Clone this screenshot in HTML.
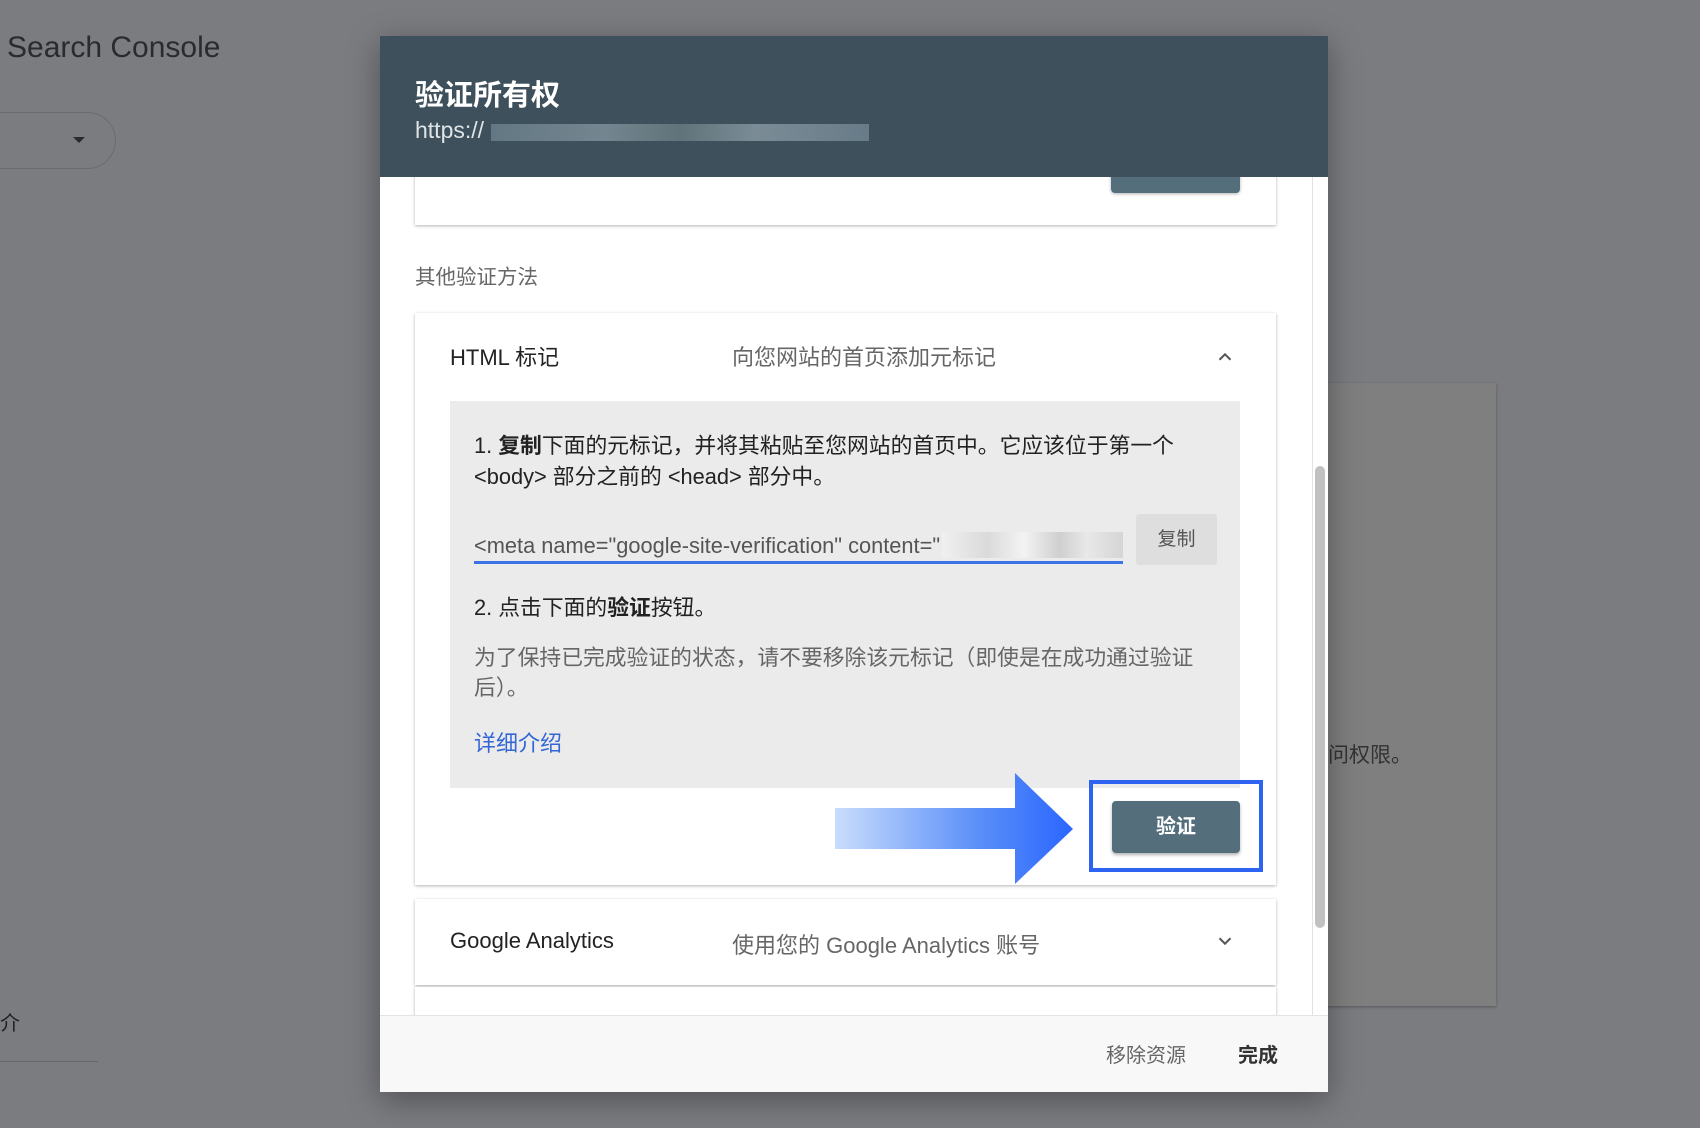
<!DOCTYPE html>
<html><head><meta charset="utf-8"><style>
*{margin:0;padding:0;box-sizing:border-box}
body{width:1700px;height:1128px;overflow:hidden;background:#7b7c80;font-family:"Liberation Sans","Noto Sans CJK SC",sans-serif;position:relative}
.a{position:absolute;white-space:nowrap}
.card{position:absolute;background:#fff;box-shadow:0 1px 3px rgba(0,0,0,.3)}
.t{color:#222;font-size:21.8px}
.g{color:#666;font-size:21.8px}
</style></head><body>
<div class="a" style="left:7px;top:31px;font-size:30px;color:#2b2b2d">Search Console</div>
<div class="a" style="left:-40px;top:112px;width:156px;height:57px;border:1px solid #6a6b6e;border-radius:29px"></div>
<div class="a" style="left:73px;top:137px;width:0;height:0;border-left:6px solid transparent;border-right:6px solid transparent;border-top:6px solid #2b2b2d"></div>
<div class="a" style="left:0;top:1007px;font-size:20px;color:#222">介</div>
<div class="a" style="left:0;top:1061px;width:98px;height:1px;background:#666"></div>
<div class="a" style="left:1310px;top:383px;width:186px;height:623px;background:#7f7f7f;box-shadow:0 1px 3px rgba(0,0,0,.3)"></div>
<div class="a" style="left:1328px;top:739px;font-size:21px;color:#333">问权限。</div>

<div class="a" style="left:380px;top:36px;width:948px;height:1056px;background:#fff;box-shadow:0 8px 30px rgba(0,0,0,.35);overflow:hidden">
 <div class="a" style="left:932px;top:141px;width:1px;height:875px;background:#e2e2e2"></div>
 <div class="a" style="left:935px;top:430px;width:10px;height:462px;background:#c1c1c1;border-radius:5px"></div>
 <div class="card" style="left:35px;top:100px;width:861px;height:89px"></div>
 <div class="a" style="left:731px;top:120px;width:129px;height:37px;background:#546f7b;border-radius:4px;box-shadow:0 1px 3px rgba(0,0,0,.3)"></div>
 <div class="a" style="left:0;top:0;width:948px;height:141px;background:#3d505b"></div>
 <div class="a" style="left:35px;top:36px;font-size:29px;color:#fff;font-weight:bold">验证所有权</div>
 <div class="a" style="left:35px;top:81px;font-size:23px;color:#dfe4e7">https://</div>
 <div class="a" style="left:111px;top:88px;width:378px;height:17px;background:linear-gradient(90deg,#6a7f8a,#7d8f99 30%,#66797f 50%,#8596a0 70%,#6f8390);opacity:.85"></div>
 <div class="a g" style="left:35px;top:224px;font-size:20.5px">其他验证方法</div>
 <div class="card" style="left:35px;top:277px;width:861px;height:572px"></div>
 <div class="a t" style="left:70px;top:304px;font-size:22px">HTML 标记</div>
 <div class="a g" style="left:352px;top:304px;font-size:22px">向您网站的首页添加元标记</div>
 <svg class="a" style="left:834px;top:310px" width="22" height="22" viewBox="0 0 24 24"><path d="M6 15l6-6 6 6" fill="none" stroke="#555" stroke-width="2.2"/></svg>
 <div class="a" style="left:70px;top:365px;width:790px;height:387px;background:#ebebeb"></div>
 <div class="a t" style="left:94px;top:394px;line-height:31px">1. <b>复制</b>下面的元标记，并将其粘贴至您网站的首页中。它应该位于第一个<br>&lt;body&gt; 部分之前的 &lt;head&gt; 部分中。</div>
 <div class="a" style="left:94px;top:497px;font-size:21.8px;color:#555">&lt;meta name="google-site-verification" content="</div>
 <div class="a" style="left:562px;top:496px;width:181px;height:26px;background:linear-gradient(90deg,#f0f0f0,#dadada 25%,#f3f3f3 45%,#cfcfcf 65%,#e8e8e8 80%,#d5d5d5)"></div>
 <div class="a" style="left:94px;top:525px;width:649px;height:3px;background:#3b73e6"></div>
 <div class="a" style="left:756px;top:478px;width:81px;height:51px;background:#dedede;border-radius:3px;color:#555;font-size:19px;text-align:center;line-height:51px">复制</div>
 <div class="a t" style="left:94px;top:555px">2. 点击下面的<b>验证</b>按钮。</div>
 <div class="a g" style="left:94px;top:607px;line-height:30px">为了保持已完成验证的状态，请不要移除该元标记（即使是在成功通过验证<br>后）。</div>
 <div class="a" style="left:94px;top:690px;font-size:22px;color:#3367d6">详细介绍</div>
 <svg class="a" style="left:455px;top:737px" width="240" height="112" viewBox="0 0 240 112"><defs><linearGradient id="ar" x1="0" x2="1"><stop offset="0" stop-color="#c9ddfd"/><stop offset=".6" stop-color="#5b8ff8"/><stop offset="1" stop-color="#2a66ff"/></linearGradient></defs><path d="M0 35H180V0L238 56L180 111V76H0Z" fill="url(#ar)"/></svg>
 <div class="a" style="left:709px;top:744px;width:174px;height:92px;border:4.5px solid #2e63f2"></div>
 <div class="a" style="left:732px;top:765px;width:128px;height:52px;background:#546f7b;border-radius:4px;box-shadow:0 2px 3px rgba(0,0,0,.3);color:#fff;font-size:20px;font-weight:bold;text-align:center;line-height:52px">验证</div>
 <div class="card" style="left:35px;top:863px;width:861px;height:86px"></div>
 <div class="a t" style="left:70px;top:892px;font-size:22px">Google Analytics</div>
 <div class="a g" style="left:352px;top:892px;font-size:22px">使用您的 Google Analytics 账号</div>
 <svg class="a" style="left:834px;top:894px" width="22" height="22" viewBox="0 0 24 24"><path d="M6 9l6 6 6-6" fill="none" stroke="#555" stroke-width="2.2"/></svg>
 <div class="card" style="left:35px;top:951px;width:861px;height:80px"></div>
 <div class="a" style="left:0;top:979px;width:948px;height:77px;background:#f8f8f8;border-top:1px solid #e4e4e4"></div>
 <div class="a" style="left:726px;top:1003px;font-size:20px;color:#666">移除资源</div>
 <div class="a" style="left:858px;top:1003px;font-size:20px;color:#333;font-weight:bold">完成</div>
</div>
</body></html>
